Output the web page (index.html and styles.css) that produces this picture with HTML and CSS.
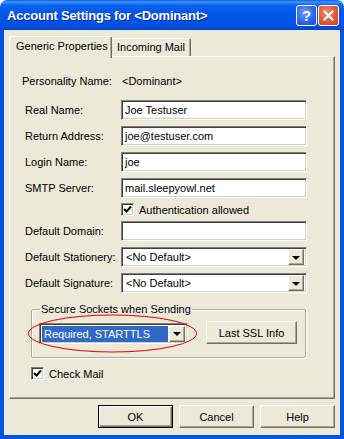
FILE: index.html
```html
<!DOCTYPE html>
<html lang="en">
<head>
    <meta charset="UTF-8">
    <title>Account Settings for &lt;Dominant&gt;</title>
    <link rel="stylesheet" href="styles.css">
</head>
<body>
    <div class="window">
        <div class="titlebar">
            <span class="title">Account Settings for &lt;Dominant&gt;</span>
            <div class="caption-buttons">
                <span class="caption-btn help">?</span>
                <span class="caption-btn close">
                    <svg width="11" height="11" viewBox="0 0 11 11"><path d="M1.5 1.5 L9.5 9.5 M9.5 1.5 L1.5 9.5" stroke="#fff" stroke-width="2.2" stroke-linecap="round"/></svg>
                </span>
            </div>
        </div>

        <div class="client">
            <div class="tabs">
                <div class="tab active">Generic Properties</div>
                <div class="tab">Incoming Mail</div>
            </div>

            <div class="panel">
                <div class="info-row">
                    <span class="label wide">Personality Name:</span>
                    <span>&lt;Dominant&gt;</span>
                </div>

                <div class="row first">
                    <span class="label">Real Name:</span>
                    <div class="field">Joe Testuser</div>
                </div>
                <div class="row">
                    <span class="label">Return Address:</span>
                    <div class="field">joe@testuser.com</div>
                </div>
                <div class="row">
                    <span class="label">Login Name:</span>
                    <div class="field">joe</div>
                </div>
                <div class="row">
                    <span class="label">SMTP Server:</span>
                    <div class="field">mail.sleepyowl.net</div>
                </div>
                <div class="check-row auth">
                    <span class="checkbox"><svg width="9" height="9" viewBox="0 0 9 9"><polyline points="1,4 3.5,6.5 8,1.5" fill="none" stroke="#000" stroke-width="2"/></svg></span>
                    <span>Authentication allowed</span>
                </div>
                <div class="row after-check">
                    <span class="label">Default Domain:</span>
                    <div class="field"></div>
                </div>
                <div class="row">
                    <span class="label">Default Stationery:</span>
                    <div class="field combo">
                        <span class="combo-text">&lt;No Default&gt;</span>
                        <span class="drop-btn"></span>
                    </div>
                </div>
                <div class="row">
                    <span class="label">Default Signature:</span>
                    <div class="field combo">
                        <span class="combo-text">&lt;No Default&gt;</span>
                        <span class="drop-btn"></span>
                    </div>
                </div>

                <fieldset class="group">
                    <legend>Secure Sockets when Sending</legend>
                    <div class="field combo ssl">
                        <span class="combo-text selected">Required, STARTTLS</span>
                        <span class="drop-btn"></span>
                    </div>
                    <div class="button ssl-info">Last SSL Info</div>
                </fieldset>

                <div class="check-row check-mail">
                    <span class="checkbox"><svg width="9" height="9" viewBox="0 0 9 9"><polyline points="1,4 3.5,6.5 8,1.5" fill="none" stroke="#000" stroke-width="2"/></svg></span>
                    <span>Check Mail</span>
                </div>
            </div>

            <div class="dialog-buttons">
                <div class="button default">OK</div>
                <div class="button">Cancel</div>
                <div class="button">Help</div>
            </div>
        </div>

        <!-- red marker drawn over the SSL combo -->
        <svg class="marker" width="344" height="439">
            <ellipse cx="112.5" cy="333.5" rx="84" ry="18.5" fill="none" stroke="#e00000" stroke-width="1"/>
        </svg>
    </div>
</body>
</html>
```

FILE: styles.css
```css
body {
    margin: 0;
    font-family: "Liberation Sans", Arial, sans-serif;
    font-size: 11px;
    color: #000;
    background: #fff;
}

.window {
    position: relative;
    width: 344px;
    height: 439px;
    display: flex;
    flex-direction: column;
}

/* title bar */
.titlebar {
    height: 30px;
    flex: none;
    display: flex;
    align-items: center;
    justify-content: space-between;
    padding: 0 5px 0 7px;
    box-sizing: border-box;
    background: linear-gradient(#0a5fe8 0, #3d95ff 2px, #0c63ec 5px, #0055ea 14px, #0053e6 24px, #0048d5 29px, #0044c8 30px);
    border-radius: 7px 7px 0 0;
}

.title {
    color: #fff;
    font-family: "Liberation Sans", sans-serif;
    font-weight: bold;
    font-size: 13px;
    letter-spacing: -0.2px;
    text-shadow: 1px 1px 0 #0a2a8a;
    margin-top: 1px;
}

.caption-buttons {
    display: flex;
    gap: 1px;
}

.caption-btn {
    width: 21px;
    height: 21px;
    box-sizing: border-box;
    border: 1px solid #fff;
    border-radius: 3px;
    display: flex;
    align-items: center;
    justify-content: center;
    color: #fff;
}

.caption-btn.help {
    background: radial-gradient(circle at 40% 35%, #6c9bff, #2a63e8 60%, #1a4cd0);
    font: bold 15px "Liberation Sans", sans-serif;
}

.caption-btn.close {
    background: radial-gradient(circle at 40% 35%, #f08a6a, #e05a38 55%, #c8401f);
}

/* client area */
.client {
    flex: 1;
    background: #ece9d8;
    border: 4px solid #0055e5;
    border-top: none;
    padding: 6px 0 0 5px;
    display: flex;
    flex-direction: column;
}

.tabs {
    display: flex;
    height: 20px;
    position: relative;
    z-index: 1;
}

.tab {
    box-sizing: border-box;
    height: 18px;
    margin-top: 2px;
    padding: 0 5px 0 5px;
    line-height: 17px;
    white-space: nowrap;
    background: #ece9d8;
    border-top: 1px solid #fff;
    border-right: 1px solid #716f64;
    box-shadow: inset -1px 0 #aca899;
    border-radius: 2px 2px 0 0;
}

.tab.active {
    height: 22px;
    margin-top: 0;
    width: 103px;
    padding: 0 0 0 6px;
    line-height: 19px;
    border-left: 1px solid #fff;
}

.panel {
    width: 326px;
    height: 343px;
    box-sizing: border-box;
    border: 1px solid;
    border-color: #fff #716f64 #716f64 #fff;
    box-shadow: inset -1px -1px #aca899;
    padding: 14px 0 0 15px;
}

.info-row {
    height: 20px;
    display: flex;
    align-items: center;
}

.label {
    width: 96px;
    flex: none;
}

.label.wide {
    margin-left: -3px;
    width: 100px;
}

.row {
    display: flex;
    align-items: center;
    height: 20px;
    margin-top: 6px;
}

.row.first {
    margin-top: 9px;
}

.field {
    width: 186px;
    height: 20px;
    box-sizing: border-box;
    border: 1px solid;
    border-color: #808080 #fff #fff #808080;
    box-shadow: inset 1px 1px #404040, inset -1px -1px #d4d0c8;
    background: #fff;
    padding: 0 3px;
    line-height: 18px;
    white-space: nowrap;
}

.combo {
    display: flex;
    align-items: center;
    padding: 2px 2px 2px 2px;
}

.combo-text {
    flex: 1;
    padding-left: 2px;
    line-height: 16px;
}

.drop-btn {
    width: 16px;
    height: 16px;
    box-sizing: border-box;
    background: #ece9d8;
    border: 1px solid;
    border-color: #fff #716f64 #716f64 #fff;
    box-shadow: inset -1px -1px #aca899;
    display: flex;
    align-items: center;
    justify-content: center;
}

.drop-btn::after {
    content: "";
    border-left: 4px solid transparent;
    border-right: 4px solid transparent;
    border-top: 4px solid #000;
    margin-top: 1px;
}

.check-row {
    display: flex;
    align-items: center;
    gap: 5px;
    height: 13px;
}

.check-row.auth {
    margin: 5px 0 0 96px;
}

.row.after-check {
    margin-top: 5px;
}

.checkbox {
    width: 13px;
    height: 13px;
    box-sizing: border-box;
    background: #fff;
    border: 1px solid;
    border-color: #808080 #fff #fff #808080;
    box-shadow: inset 1px 1px #404040, inset -1px -1px #d4d0c8;
    display: flex;
    align-items: center;
    justify-content: center;
}

/* SSL group */
.group {
    margin: 10px 0 0 6px;
    width: 275px;
    box-sizing: border-box;
    border: 1px solid #aca899;
    box-shadow: 1px 1px 0 #fff inset, 1px 1px 0 #fff;
    padding: 5px 0 13px 7px;
    display: flex;
    align-items: flex-end;
    border-radius: 2px;
}

.group legend {
    padding: 0 1px;
    margin-left: 1px;
    line-height: 13px;
}

.field.ssl {
    width: 149px;
    height: 21px;
}

.combo-text.selected {
    background: #316ac5;
    color: #fff;
    margin-right: 1px;
    padding-left: 2px;
}

.button {
    width: 75px;
    height: 23px;
    box-sizing: border-box;
    background: #ece9d8;
    border: 1px solid;
    border-color: #fff #716f64 #716f64 #fff;
    box-shadow: inset -1px -1px #aca899;
    display: flex;
    align-items: center;
    justify-content: center;
}

.button.ssl-info {
    width: 91px;
    margin-left: 18px;
}

.button.default {
    border-color: #000;
    box-shadow: inset 1px 1px #fff, inset -1px -1px #716f64, inset -2px -2px #aca899;
}

.check-row.check-mail {
    margin: 9px 0 0 6px;
}

.dialog-buttons {
    display: flex;
    justify-content: flex-end;
    gap: 6px;
    margin: 6px 5px 0 0;
}

.marker {
    position: absolute;
    left: 0;
    top: 0;
    pointer-events: none;
}
```
